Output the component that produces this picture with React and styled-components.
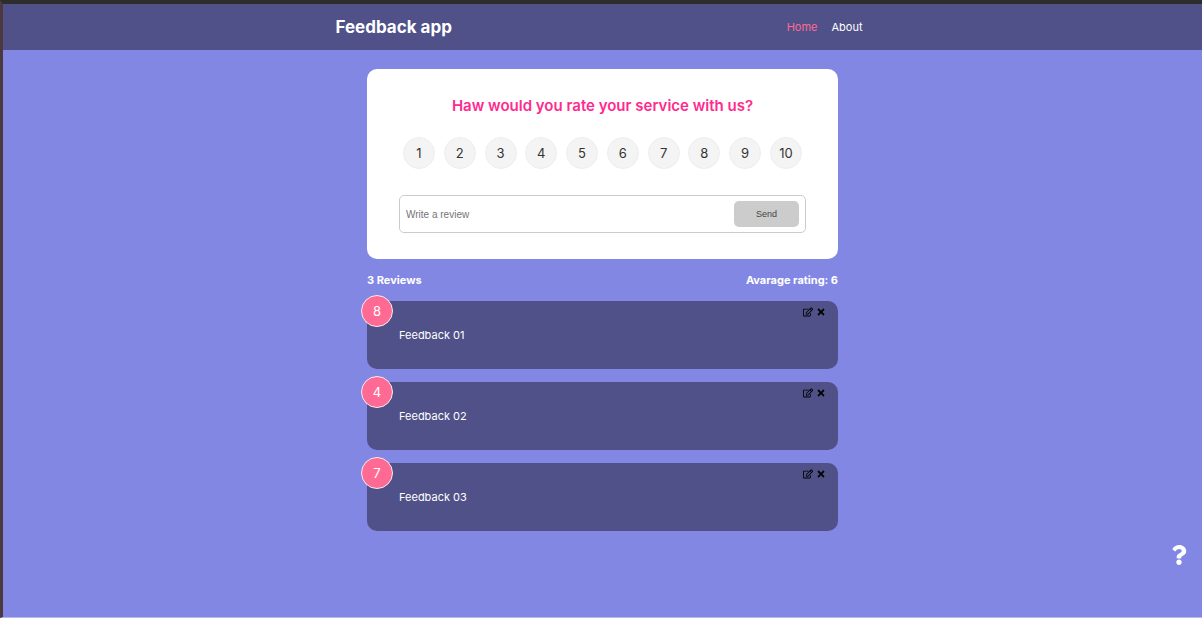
import React, { useState } from "react";
import styled, { createGlobalStyle } from "styled-components";
import { FaQuestion, FaRegEdit, FaTimes } from "react-icons/fa";

const GlobalStyle = createGlobalStyle`
  *, *::before, *::after { box-sizing: border-box; }
  body {
    margin: 0;
    background: #8387e4;
    color: #fff;
    font-family: Inter, "Open Sans", sans-serif;
    font-size: 11px;
    line-height: 16px;
  }
`;

const Page = styled.div`
  min-height: 100vh;
  border-top: 4px solid #2d2d2d;
  border-left: 3px solid #4b393d;
  border-bottom: 1px solid #b5b7ed;
`;

const Header = styled.header`
  display: flex;
  justify-content: center;
  padding: 0 20px;
  background: #4f5188;
`;

const HeaderInner = styled.div`
  display: flex;
  flex: 1;
  align-items: center;
  justify-content: space-between;
  max-width: 534px;
  min-height: 46px;
`;

const Brand = styled.h1`
  margin: 0;
  font-size: 17px;
  font-weight: 700;
  line-height: 24px;
`;

const Nav = styled.nav`
  display: flex;
`;

const NavLink = styled.a`
  padding: 0 7px;
  color: ${(p) => (p.$active ? "#ff6a95" : "#fff")};
  text-decoration: none;
`;

const Main = styled.main`
  max-width: 511px;
  margin: 0 auto;
  padding: 19px 20px 20px;
`;

const RatingForm = styled.form`
  padding: 25px 32px 26px;
  border-radius: 10px;
  background: #fff;
  color: #333;
`;

const Question = styled.h2`
  margin: 0 0 19px;
  color: #ff2a8e;
  font-size: 15px;
  font-weight: 600;
  line-height: 24px;
  text-align: center;
`;

const Ratings = styled.div`
  display: flex;
  justify-content: space-between;
  margin: 0 4px 26px;
`;

const RatingInput = styled.input`
  position: absolute;
  opacity: 0;
`;

const RatingOption = styled.label`
  display: flex;
  align-items: center;
  justify-content: center;
  width: 32px;
  height: 32px;
  border: 1px solid #eee;
  border-radius: 50%;
  background: #f4f4f4;
  font-size: 13px;
  cursor: pointer;

  &:has(input:checked) {
    background: #ff6a95;
    color: #fff;
  }
`;

const InputGroup = styled.div`
  display: flex;
  align-items: center;
  padding: 5px 6px;
  border: 1px solid #ccc;
  border-radius: 5px;
`;

const ReviewInput = styled.input`
  flex: 1;
  min-width: 0;
  padding: 0;
  border: 0;
  outline: 0;
  font-family: "Liberation Sans", Arial, sans-serif;
  font-size: 10px;

  &::placeholder { color: #757575; }
`;

const SendButton = styled.button`
  width: 65px;
  height: 26px;
  border: 0;
  border-radius: 5px;
  background: #ccc;
  color: #444;
  font-family: "Liberation Sans", Arial, sans-serif;
  font-size: 9px;
`;

const Stats = styled.div`
  display: flex;
  justify-content: space-between;
  margin: 13px 0;
  font-weight: 700;
`;

const Reviews = styled.ul`
  display: grid;
  gap: 13px;
  margin: 0;
  padding: 0;
  list-style: none;
`;

const Review = styled.li`
  position: relative;
  min-height: 68px;
  padding: 26px 32px;
  border-radius: 10px;
  background: #4f5188;
`;

const Score = styled.span`
  position: absolute;
  top: -6px;
  left: -6px;
  display: flex;
  align-items: center;
  justify-content: center;
  width: 32px;
  height: 32px;
  border: 1px solid #eee;
  border-radius: 50%;
  background: #ff6a95;
  font-size: 13px;
`;

const ReviewText = styled.p`
  margin: 0;
`;

const Actions = styled.div`
  position: absolute;
  top: 6px;
  right: 12px;
  display: flex;
  gap: 3px;
`;

const IconButton = styled.button`
  display: flex;
  padding: 0;
  border: 0;
  background: none;
  color: #000;
  cursor: pointer;
`;

const HelpLink = styled.a`
  position: fixed;
  right: 13px;
  bottom: 53px;
  display: flex;
  color: #fff;
`;

const scores = [1, 2, 3, 4, 5, 6, 7, 8, 9, 10];

const reviews = [
  { id: 1, score: 8, text: "Feedback 01" },
  { id: 2, score: 4, text: "Feedback 02" },
  { id: 3, score: 7, text: "Feedback 03" },
];

export default function App() {
  const [text, setText] = useState("");

  return (
    <Page>
      <GlobalStyle />
      <Header>
        <HeaderInner>
          <Brand>Feedback app</Brand>
          <Nav>
            <NavLink href="#home" $active>Home</NavLink>
            <NavLink href="#about">About</NavLink>
          </Nav>
        </HeaderInner>
      </Header>
      <Main>
        <RatingForm onSubmit={(e) => e.preventDefault()}>
          <Question id="question">Haw would you rate your service with us?</Question>
          <Ratings role="radiogroup" aria-labelledby="question">
            {scores.map((n) => (
              <RatingOption key={n}>
                <RatingInput type="radio" name="rating" value={n} />
                {n}
              </RatingOption>
            ))}
          </Ratings>
          <InputGroup>
            <ReviewInput
              type="text"
              aria-label="Write a review"
              placeholder="Write a review"
              value={text}
              onChange={(e) => setText(e.target.value)}
            />
            <SendButton type="submit">Send</SendButton>
          </InputGroup>
        </RatingForm>
        <Stats>
          <span>3 Reviews</span>
          <span>Avarage rating: 6</span>
        </Stats>
        <Reviews>
          {reviews.map((r) => (
            <Review key={r.id}>
              <Score>{r.score}</Score>
              <Actions>
                <IconButton type="button" aria-label="Edit"><FaRegEdit size={10} /></IconButton>
                <IconButton type="button" aria-label="Delete"><FaTimes size={10} /></IconButton>
              </Actions>
              <ReviewText>{r.text}</ReviewText>
            </Review>
          ))}
        </Reviews>
      </Main>
      <HelpLink href="#about" aria-label="About"><FaQuestion size={20} /></HelpLink>
    </Page>
  );
}
